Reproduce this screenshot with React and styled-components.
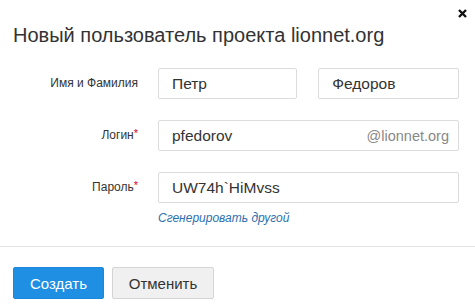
import React from "react";
import styled, { createGlobalStyle } from "styled-components";

const Global = createGlobalStyle`
  html, body { margin: 0; padding: 0; background: #fff; }
  body { font-family: Arial, "Liberation Sans", sans-serif; color: #333; }
`;

const Dialog = styled.div`
  width: 475px;
  height: 306px;
  background: #fff;
  position: relative;
  box-sizing: border-box;
`;

const Header = styled.div`
  padding: 24px 13px 0 13px;
  height: 43px;
  box-sizing: border-box;
`;

const Title = styled.h1`
  margin: 0;
  font-size: 20px;
  font-weight: normal;
  line-height: 22px;
  color: #333;
`;

const Close = styled.button`
  position: absolute;
  top: 6px;
  right: 6px;
  width: 14px;
  height: 14px;
  padding: 0;
  border: 0;
  background: none;
  display: flex;
  align-items: center;
  justify-content: center;
`;

const Form = styled.div`
  padding: 25px 16px 0 0;
  display: flex;
  flex-direction: column;
  gap: 21px;
  height: 204px;
  box-sizing: border-box;
  border-bottom: 1px solid #e3e3e3;
`;

const Row = styled.div`
  display: grid;
  grid-template-columns: 138px 1fr;
  column-gap: 20px;
`;

const Label = styled.div`
  text-align: right;
  font-size: 12px;
  color: #333;
  padding-top: 8px;
  line-height: 14px;
`;

const Req = styled.span`
  color: #d0021b;
  font-size: 11px;
  vertical-align: top;
  position: relative;
  top: -2px;
`;

const Fields = styled.div`
  display: flex;
  gap: 21px;
`;

const FieldCol = styled.div`
  display: flex;
  flex-direction: column;
`;

const InputBox = styled.div`
  flex: ${(p) => p.$flex || "none"};
  height: 31px;
  box-sizing: border-box;
  border: 1px solid #dcdcdc;
  border-radius: 2px;
  display: flex;
  align-items: center;
  padding: 0 9px 0 13px;
  font-size: 15.5px;
  color: #333;
`;

const Value = styled.span`
  flex: 1;
`;

const Suffix = styled.span`
  color: #888;
  font-size: 14.5px;
`;

const Link = styled.a`
  margin-top: 8px;
  font-size: 12px;
  font-style: italic;
  color: #2d6fae;
  text-decoration: none;
  line-height: 14px;
`;

const Footer = styled.div`
  padding: 20px 13px 0;
  display: flex;
  gap: 8px;
`;

const Button = styled.button`
  height: 32px;
  box-sizing: border-box;
  border-radius: 2px;
  font-family: Arial, "Liberation Sans", sans-serif;
  font-size: 15px;
  padding: 0;
  width: ${(p) => p.$w}px;
  border: 1px solid ${(p) => (p.$primary ? "#1b88db" : "#d4d4d4")};
  background: ${(p) => (p.$primary ? "#1e8fe3" : "#f0f0f0")};
  color: ${(p) => (p.$primary ? "#fff" : "#333")};
`;

export default function App() {
  return (
    <>
      <Global />
      <Dialog>
        <Header>
          <Title>Новый пользователь проекта lionnet.org</Title>
        </Header>
        <Close aria-label="close">
          <svg width="9" height="9" viewBox="0 0 9 9">
            <path d="M1 1L8 8M8 1L1 8" stroke="#111" strokeWidth="2.4" />
          </svg>
        </Close>
        <Form>
          <Row>
            <Label>Имя и Фамилия</Label>
            <Fields>
              <InputBox $flex={139}>
                <Value>Петр</Value>
              </InputBox>
              <InputBox $flex={141}>
                <Value>Федоров</Value>
              </InputBox>
            </Fields>
          </Row>
          <Row>
            <Label>
              Логин<Req>*</Req>
            </Label>
            <InputBox>
              <Value>pfedorov</Value>
              <Suffix>@lionnet.org</Suffix>
            </InputBox>
          </Row>
          <Row>
            <Label>
              Пароль<Req>*</Req>
            </Label>
            <FieldCol>
              <InputBox>
                <Value>UW74h`HiMvss</Value>
              </InputBox>
              <Link href="#">Сгенерировать другой</Link>
            </FieldCol>
          </Row>
        </Form>
        <Footer>
          <Button $primary $w={91}>Создать</Button>
          <Button $w={102}>Отменить</Button>
        </Footer>
      </Dialog>
    </>
  );
}
